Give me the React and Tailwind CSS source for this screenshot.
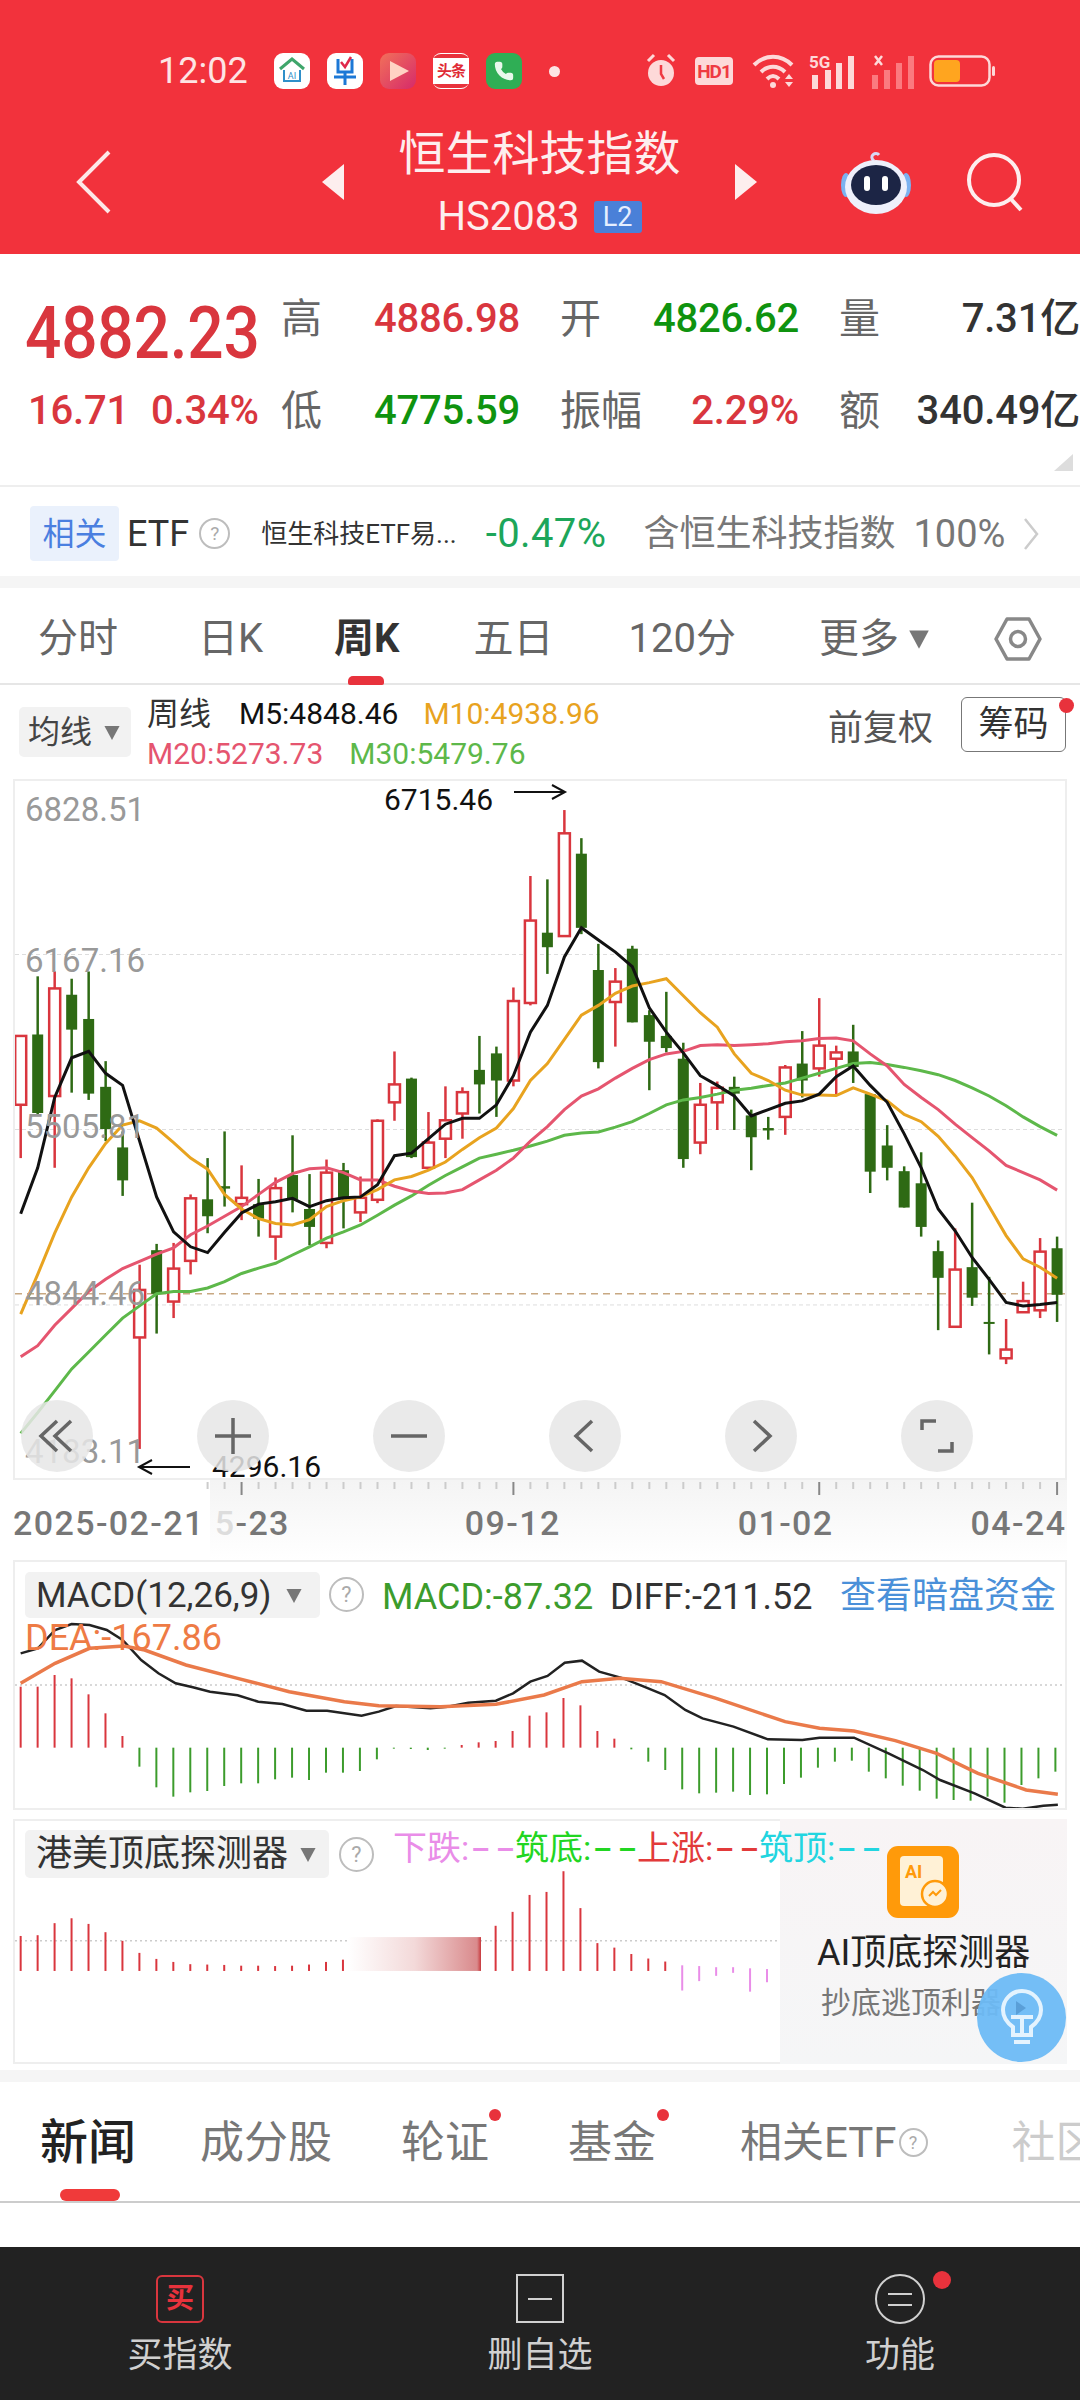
import React from 'react';
import { Phone } from 'lucide-react';

// candle data read off the chart: [colour, wick top, wick bottom, body top, body bottom]
const candles = [
  ['r',528,780,528,670],['g',405,690,525,687],['r',395,800,430,652],['g',410,645,443,515],['g',395,660,493,647],
  ['g',580,745,633,720],['g',725,858,758,826],['r',1000,1380,1052,1150],['g',957,1142,970,1060],['r',955,1110,1008,1076],
  ['r',855,1020,863,992],['g',780,935,865,900],['g',725,880,838,843],['r',795,908,862,875],['g',823,942,875,905],
  ['r',820,990,842,942],['g',733,892,815,865],['g',813,960,885,922],['r',783,966,810,955],['g',790,925,805,865],
  ['r',818,912,862,892],['r',700,873,703,866],['r',560,703,628,665],['g',614,780,616,778],['r',685,802,748,800],
  ['r',632,780,702,740],['r',634,740,644,688],['g',528,688,598,628],['g',550,695,564,620],['r',428,632,456,620],
  ['r',198,465,290,460],['g',205,400,315,345],['r',62,322,110,322],['g',120,318,152,305],['g',338,595,392,582],
  ['r',388,550,416,458],['g',342,500,348,500],['g',475,640,485,540],['g',437,562,528,553],['g',542,800,575,782],
  ['r',625,772,670,748],['r',622,722,635,665],['g',612,722,633,647],['g',680,805,692,737],['g',695,742,718,723],
  ['r',588,732,593,695],['g',518,655,585,620],['r',450,612,548,595],['r',548,650,562,575],['g',505,625,560,592],
  ['g',648,852,648,808],['g',712,826,754,800],['g',797,882,807,882],['g',768,942,832,922],['g',950,1135,972,1027],
  ['r',925,1130,1010,1128],['g',872,1085,1005,1068],['g',1025,1185,1118,1122],['r',1112,1205,1175,1193],['r',1035,1098,1075,1098],
  ['r',945,1110,973,1094],['g',942,1118,966,1062],
];

const ma5 = [895,800,655,573,560,605,630,745,860,932,963,975,933,893,875,870,863,880,868,862,860,835,775,770,740,710,698,698,670,610,520,465,365,305,330,355,385,470,520,563,610,630,652,693,680,667,662,648,612,590,630,665,730,800,885,930,985,1030,1078,1085,1082,1078];
const ma10 = [1102,1020,935,860,800,750,712,703,718,748,780,803,855,885,905,915,918,907,880,868,860,845,825,818,805,788,762,738,718,678,620,585,535,485,465,440,425,418,410,445,480,510,565,605,620,640,650,650,651,635,648,662,690,705,735,775,820,880,940,988,1005,1028];
const ma20 = [1190,1167,1125,1090,1055,1030,1008,993,978,965,938,920,900,880,855,830,812,802,800,810,825,825,838,848,853,852,845,825,805,780,745,715,680,652,637,615,595,577,565,560,548,546,548,546,544,540,538,533,532,538,565,590,628,655,680,710,738,765,795,810,825,846];
const ma30 = [1348,1305,1260,1215,1180,1145,1110,1085,1060,1055,1055,1048,1035,1018,1007,997,980,963,945,932,918,898,877,858,836,816,798,780,772,764,755,745,733,728,726,716,705,688,670,660,655,648,640,636,630,625,615,605,595,585,583,587,593,600,608,620,635,652,672,695,715,733];

const macdBars = [410,410,375,385,433,490,558,650,712,740,727,723,708,700,700,688,683,690,668,668,663,628,596,597,600,596,585,577,573,543,497,487,444,466,543,566,598,635,660,718,730,728,725,735,733,702,683,653,635,632,665,685,707,722,746,750,752,740,758,705,685,665];
const macdBlack = [[30,310],[55,295],[80,240],[104,222],[130,225],[155,240],[178,270],[205,330],[230,370],[255,400],[280,412],[305,425],[345,436],[375,455],[410,462],[445,482],[475,482],[525,497],[550,485],[575,468],[625,475],[650,470],[680,458],[720,452],[745,430],[770,395],[795,378],[820,338],[845,332],[870,365],[905,385],[935,410],[965,435],[995,480],[1020,505],[1065,530],[1115,568],[1165,570],[1190,563],[1240,563],[1290,610],[1340,660],[1365,690],[1415,730],[1460,773],[1485,776],[1515,767],[1536,764]];
const macdOrange = [[30,400],[80,340],[130,295],[180,288],[210,300],[270,345],[345,385],[420,425],[500,455],[550,467],[640,470],[720,463],[790,435],[845,395],[900,385],[960,395],[1040,445],[1140,515],[1190,535],[1240,543],[1300,572],[1360,610],[1420,670],[1490,720],[1536,733]];

const detectorRed = [332,330,298,285,300,322,345,377,393,401,407,408,409,411,411,412,411,408,401,395];
const detectorRed2 = [305,268,223,215,160,258,351,363,380,392,400];
const detectorPink = [[410,477],[412,452],[415,438],[415,430],[418,480],[420,455]];

const candleX = (i) => 20.7 + 16.99 * i;
const chartY = (z) => 780 + z / 2.063;
const maPoints = (arr) => arr.map((v, i) => `${candleX(i).toFixed(1)},${chartY(v).toFixed(1)}`).join(' ');

const macdX = (z) => z / 1.452;
const macdY = (z) => 1550 + z / 3;
const detX = (i) => (30 + 24.63 * i) / 1.452;
const detY = (z) => 1810 + z / 2.657;

function Help({ size, className = '' }) {
  return (
    <span
      style={{ width: size, height: size, fontSize: size * 0.62 }}
      className={`flex shrink-0 items-center justify-center rounded-full border-2 border-[#bdbdbd] leading-none text-[#aaa] ${className}`}
    >
      ?
    </span>
  );
}

function Caret({ className = '' }) {
  return (
    <svg viewBox="0 0 18 18" className={`shrink-0 ${className}`}>
      <path d="M1 2h16L9 17z" fill="#777" />
    </svg>
  );
}

function Stat({ label, value, color, wide }) {
  return (
    <div className={`flex items-center justify-between ${wide ? '' : 'pr-[40px]'}`}>
      <span className="text-[41px] leading-none text-[#666]">{label}</span>
      <span className={`text-[40px] leading-none font-medium tracking-[-0.2px] ${color}`}>{value}</span>
    </div>
  );
}

function StatusBar() {
  return (
    <div className="flex h-[36px] items-center pl-[158px] pt-0 mt-[53px]">
      <span className="w-[92px] text-[36px] leading-none text-[#fde4e4]">12:02</span>
      <svg viewBox="0 0 36 36" className="ml-[24px] h-[36px] w-[36px]">
        <rect width="36" height="36" rx="9" fill="#fff" />
        <path d="M6 16 18 6l12 10" fill="none" stroke="#3fa66b" strokeWidth="3" />
        <path d="M10 17v11h16V17" fill="none" stroke="#2f8fc9" strokeWidth="2" />
        <text x="18" y="26" textAnchor="middle" fontSize="9" fill="#2f8fc9">AI</text>
      </svg>
      <svg viewBox="0 0 36 36" className="ml-[17px] h-[36px] w-[36px]">
        <rect width="36" height="36" rx="9" fill="#fff" />
        <path d="M11 6v13h14V6" fill="none" stroke="#1c78d6" strokeWidth="3" />
        <path d="M14 9l4 5 6-10" fill="none" stroke="#e0284a" strokeWidth="2.5" />
        <path d="M7 24h22M18 19v13" stroke="#1c78d6" strokeWidth="3" />
      </svg>
      <svg viewBox="0 0 36 36" className="ml-[17px] h-[36px] w-[36px]">
        <defs>
          <linearGradient id="playBg" x1="0" y1="0" x2="1" y2="1">
            <stop offset="0" stopColor="#f2705a" />
            <stop offset="1" stopColor="#d62a6a" />
          </linearGradient>
        </defs>
        <rect width="36" height="36" rx="9" fill="url(#playBg)" />
        <path d="M10 8l19 10-19 10z" fill="#ffd3c4" />
      </svg>
      <div className="ml-[17px] flex h-[36px] w-[36px] items-center justify-center rounded-[8px] border-y border-white bg-[#e8323c] outline-0">
        <span className="flex h-[26px] w-[36px] items-center justify-center bg-white text-[15px] leading-none font-bold tracking-[-1px] text-[#e02b36]">头条</span>
      </div>
      <div className="ml-[17px] flex h-[36px] w-[36px] items-center justify-center rounded-[9px] bg-[#2fae55]">
        <Phone size={20} fill="#e8f8ec" stroke="#e8f8ec" />
      </div>
      <span className="ml-[27px] h-[11px] w-[11px] rounded-full bg-[#fde4e4]" />
      <svg viewBox="0 0 32 36" className="ml-[85px] h-[36px] w-[32px]">
        <circle cx="16" cy="20" r="13" fill="#fdd9d9" />
        <path d="M16 12v9l3 5" fill="none" stroke="#ef3a42" strokeWidth="2.5" />
        <path d="M3 8l6-6M29 8l-6-6" stroke="#fdd9d9" strokeWidth="3" />
      </svg>
      <div className="ml-[18px] flex h-[28px] w-[38px] items-center justify-center rounded-[4px] bg-[#fdd9d9] text-[19px] leading-none font-bold tracking-[-1px] text-[#ef3a42]">HD1</div>
      <svg viewBox="0 0 44 36" className="ml-[19px] h-[36px] w-[44px]">
        <path d="M2 12C13 1 29 1 40 12" fill="none" stroke="#fdd9d9" strokeWidth="4" />
        <path d="M9 19c7-7 17-7 24 0" fill="none" stroke="#fdd9d9" strokeWidth="4" />
        <path d="M15 26c4-4 8-4 12 0" fill="none" stroke="#fdd9d9" strokeWidth="4" />
        <circle cx="21" cy="32" r="3" fill="#fdd9d9" />
        <path d="M33 26l4-5 4 5zM33 29l4 5 4-5z" fill="#fdd9d9" />
      </svg>
      <svg viewBox="0 0 47 36" className="ml-[13px] h-[36px] w-[47px]">
        <text x="0" y="15" fontSize="17" fontWeight="700" fill="#fdd9d9">5G</text>
        <rect x="3" y="22" width="6" height="14" fill="#fdd9d9" />
        <rect x="16" y="17" width="6" height="19" fill="#fdd9d9" />
        <rect x="27" y="10" width="6" height="26" fill="#fdd9d9" />
        <rect x="39" y="3" width="6" height="33" fill="#fdd9d9" />
      </svg>
      <svg viewBox="0 0 44 36" className="ml-[15px] h-[36px] w-[44px]">
        <path d="M4 3l7 9M11 3l-7 9" stroke="#fdd9d9" strokeWidth="2.5" />
        <rect x="1" y="22" width="6" height="14" fill="#fb7a7f" />
        <rect x="13" y="17" width="6" height="19" fill="#fb7a7f" />
        <rect x="25" y="10" width="6" height="26" fill="#fb7a7f" />
        <rect x="37" y="3" width="6" height="33" fill="#fb7a7f" />
      </svg>
      <svg viewBox="0 0 66 32" className="ml-[14px] h-[32px] w-[66px]">
        <rect x="1.5" y="1.5" width="59" height="29" rx="8" fill="none" stroke="#fdd9d9" strokeWidth="2.5" />
        <rect x="5" y="5" width="26" height="22" rx="4" fill="#ffa51f" />
        <rect x="63" y="11" width="3" height="10" rx="1.5" fill="#fdd9d9" />
      </svg>
    </div>
  );
}

function NavBar() {
  return (
    <div className="mt-[41px] flex h-[104px] items-center">
      <svg viewBox="0 0 36 64" className="ml-[76px] h-[64px] w-[36px]">
        <path d="M33 2 3 32l30 30" fill="none" stroke="#fde8e8" strokeWidth="4" />
      </svg>
      <svg viewBox="0 0 22 36" className="ml-[210px] h-[36px] w-[22px]">
        <path d="M22 0v36L0 18z" fill="#fdeeee" />
      </svg>
      <div className="flex w-[391px] flex-col items-center">
        <span className="text-[47px] leading-[46px] text-[#fdeeee]">恒生科技指数</span>
        <div className="mt-[24px] flex items-center">
          <span className="text-[40px] leading-[32px] text-[#fdeeee]">HS2083</span>
          <span className="ml-[14px] flex h-[32px] w-[48px] items-center justify-center rounded-[3px] bg-[#4a80d8] text-[27px] leading-none text-[#e6eeff]">L2</span>
        </div>
      </div>
      <svg viewBox="0 0 22 36" className="h-[36px] w-[22px]">
        <path d="M0 0v36l22-18z" fill="#fdeeee" />
      </svg>
      <svg viewBox="0 0 72 66" className="ml-[83px] h-[66px] w-[72px]">
        <path d="M34 12c-6-5 2-10 5-6" fill="none" stroke="#d8d8f4" strokeWidth="3" />
        <ellipse cx="6" cy="36" rx="5" ry="12" fill="#7bb2f0" />
        <ellipse cx="66" cy="36" rx="5" ry="12" fill="#7bb2f0" />
        <ellipse cx="36" cy="38" rx="31" ry="27" fill="#eef0fb" />
        <ellipse cx="36" cy="36" rx="25" ry="20" fill="#1c2545" />
        <rect x="24" y="27" width="6" height="15" rx="3" fill="#fff" />
        <rect x="42" y="27" width="6" height="15" rx="3" fill="#fff" />
      </svg>
      <svg viewBox="0 0 60 60" className="ml-[54px] h-[60px] w-[60px]">
        <circle cx="28" cy="28" r="25" fill="none" stroke="#fdeeee" strokeWidth="4" />
        <path d="M44 46l11 12" stroke="#fdeeee" strokeWidth="4" />
      </svg>
    </div>
  );
}

function Quote() {
  return (
    <div className="relative h-[233px] border-b-2 border-[#eee] pl-[25px] pt-[19px]">
      <div className="grid grid-cols-[256px_279px_279px_241px] grid-rows-[92px_92px]">
        <div className="flex origin-left scale-y-[1.12] items-center pt-[28px] text-[64px] leading-none font-medium tracking-[-0.2px] text-[#d9363e]">4882.23</div>
        <Stat label="高" value="4886.98" color="text-[#d9363e]" />
        <Stat label="开" value="4826.62" color="text-[#0f930f]" />
        <Stat label="量" value="7.31亿" color="text-[#333]" wide />
        <div className="flex items-center text-[40px] leading-none font-medium tracking-[-0.2px] text-[#d9363e]">
          <span className="ml-[3px] w-[123px]">16.71</span>
          <span>0.34%</span>
        </div>
        <Stat label="低" value="4775.59" color="text-[#0f930f]" />
        <Stat label="振幅" value="2.29%" color="text-[#d9363e]" />
        <Stat label="额" value="340.49亿" color="text-[#333]" wide />
      </div>
      <svg viewBox="0 0 19 17" className="absolute right-[7px] top-[200px] h-[17px] w-[19px]">
        <path d="M19 0v17H0z" fill="#ddd" />
      </svg>
    </div>
  );
}

function EtfRow() {
  return (
    <div className="flex h-[89px] items-start pt-[19px]">
      <span className="ml-[30px] flex h-[55px] w-[89px] items-center justify-center rounded-[4px] bg-[#eaf1fc] text-[32px] leading-none text-[#4a7fe0]">相关</span>
      <span className="ml-[8px] flex h-[55px] items-center text-[36px] leading-none text-[#333]">ETF</span>
      <div className="flex h-[55px] items-center"><Help size={31} className="ml-[10px]" /></div>
      <span className="ml-[31px] flex h-[55px] items-center text-[26px] leading-none text-[#333]">恒生科技ETF易...</span>
      <span className="ml-[29px] flex h-[55px] items-center text-[40px] leading-none tracking-[0.4px] text-[#1da65a]">-0.47%</span>
      <span className="ml-[37px] flex h-[55px] items-center text-[36px] leading-none text-[#777]">含恒生科技指数</span>
      <span className="ml-[18px] flex h-[55px] items-center text-[38px] leading-none text-[#777]">100%</span>
      <div className="ml-[18px] flex h-[55px] items-center">
        <svg viewBox="0 0 16 32" className="h-[32px] w-[16px]">
          <path d="M2 1l12 15L2 31" fill="none" stroke="#ccc" strokeWidth="2.5" />
        </svg>
      </div>
    </div>
  );
}

function PeriodTabs() {
  return (
    <div className="relative flex h-[97px] items-center border-b-2 border-[#e6e6e6] pt-[6px] text-[40px] leading-none text-[#666]">
      <span className="ml-[38px]">分时</span>
      <span className="ml-[80px]">日K</span>
      <span className="ml-[71px] font-bold text-[#333]">周K</span>
      <span className="ml-[74px]">五日</span>
      <span className="ml-[75px]">120分</span>
      <span className="ml-[83px]">更多</span>
      <Caret className="ml-[9px] h-[22px] w-[22px]" />
      <svg viewBox="0 0 48 46" className="ml-[64px] h-[46px] w-[48px]">
        <path d="M13 3h22l11 20-11 20H13L2 23z" fill="none" stroke="#888" strokeWidth="3.5" strokeLinejoin="round" />
        <circle cx="24" cy="23" r="7.5" fill="none" stroke="#888" strokeWidth="3.5" />
      </svg>
      <span className="absolute bottom-[-2px] left-[348px] h-[9px] w-[36px] rounded-t-[5px] rounded-b-[2px] bg-[#e8323c]" />
    </div>
  );
}

function MaLegend() {
  return (
    <div className="relative flex h-[94px] items-start text-[30px] leading-none">
      <div className="ml-[19px] mt-[22px] flex h-[50px] w-[112px] items-center rounded-[5px] bg-[#f2f2f2] pl-[9px]">
        <span className="text-[32px] text-[#444]">均线</span>
        <Caret className="ml-[11px] h-[17px] w-[18px]" />
      </div>
      <div className="ml-[16px] mt-[14px] flex flex-col gap-[10px]">
        <div className="flex h-[30px] items-center">
          <span className="text-[32px] text-[#333]">周线</span>
          <span className="ml-[28px] text-[#111]">M5:4848.46</span>
          <span className="ml-[25px] text-[#e8a31f]">M10:4938.96</span>
        </div>
        <div className="flex h-[30px] items-center">
          <span className="text-[#e5556f]">M20:5273.73</span>
          <span className="ml-[26px] text-[#5db84a]">M30:5479.76</span>
        </div>
      </div>
      <span className="absolute left-[828px] top-[26px] text-[35px] text-[#555]">前复权</span>
      <span className="absolute left-[961px] top-[12px] flex h-[55px] w-[105px] items-center justify-center rounded-[6px] border-[1.5px] border-[#777] text-[35px] text-[#333]">筹码</span>
      <span className="absolute left-[1059px] top-[13px] h-[15px] w-[15px] rounded-full bg-[#e8323c]" />
    </div>
  );
}

function Candle({ c, i }) {
  const x = candleX(i);
  const [kind, wt, wb, bt, bb] = c;
  const top = chartY(bt);
  const h = Math.max(chartY(bb) - top, 2);
  if (kind === 'g') {
    return (
      <g>
        <line x1={x} x2={x} y1={chartY(wt)} y2={chartY(wb)} stroke="#2e6a14" strokeWidth="2.5" />
        <rect x={x - 5.5} y={top} width="11" height={h} fill="#2e6a14" />
      </g>
    );
  }
  return (
    <g>
      <line x1={x} x2={x} y1={chartY(wt)} y2={chartY(wb)} stroke="#d9363e" strokeWidth="2.5" />
      <rect x={x - 5.5} y={top} width="11" height={h} fill="#fff" stroke="#d9363e" strokeWidth="2.5" />
    </g>
  );
}

function KChart() {
  const labels = [
    ['6828.51', 'top-[13px]'],
    ['6167.16', 'top-[164px]'],
    ['5505.81', 'top-[330px]'],
    ['4844.46', 'top-[497px]'],
    ['4183.11', 'top-[655px]'],
  ];
  const buttons = [57, 233, 409, 585, 761, 937];
  return (
    <div className="relative ml-[13px] h-[701px] w-[1054px] outline-2 -outline-offset-2 outline-[#eee]">
      <svg viewBox="13 779 1054 701" className="block h-[701px] w-[1054px]">
        {[360, 721, 1083].map((z) => (
          <line key={z} x1="15" x2="1065" y1={chartY(z)} y2={chartY(z)} stroke="#ddd" strokeWidth="1" strokeDasharray="4 3" />
        ))}
        <line x1="15" x2="1065" y1={chartY(1060)} y2={chartY(1060)} stroke="#c8a882" strokeWidth="1.5" strokeDasharray="7 5" />
        {candles.map((c, i) => (
          <Candle key={i} c={c} i={i} />
        ))}
        <polyline points={maPoints(ma30)} fill="none" stroke="#5db84a" strokeWidth="3" />
        <polyline points={maPoints(ma20)} fill="none" stroke="#e5556f" strokeWidth="3" />
        <polyline points={maPoints(ma10)} fill="none" stroke="#e8a31f" strokeWidth="3" />
        <polyline points={maPoints(ma5)} fill="none" stroke="#111" strokeWidth="3" />
        <path d="M514 792h50M552 785l13 7-13 7" fill="none" stroke="#111" strokeWidth="2" />
        <path d="M190 1467h-50M152 1460l-13 7 13 7" fill="none" stroke="#111" strokeWidth="2" />
      </svg>
      {labels.map(([t, pos]) => (
        <span key={t} className={`absolute left-[12px] text-[33px] leading-[36px] text-[#999] ${pos}`}>{t}</span>
      ))}
      <span className="absolute left-[371px] top-[4px] text-[30px] leading-[34px] text-[#111]">6715.46</span>
      <span className="absolute left-[199px] top-[671px] text-[30px] leading-[34px] text-[#111]">4296.16</span>
      {buttons.map((x, i) => (
        <span key={x} style={{ left: x - 49 }} className="absolute top-[621px] flex h-[72px] w-[72px] items-center justify-center rounded-full bg-[#e6e6e6]/85">
          <svg viewBox="0 0 40 40" className="h-[40px] w-[40px]" fill="none" stroke="#666" strokeWidth="3.5">
            {i === 0 && <path d="M20 5 4 20l16 15M34 5 18 20l16 15" />}
            {i === 1 && <path d="M20 2v36M2 20h36" />}
            {i === 2 && <path d="M2 20h36" />}
            {i === 3 && <path d="M27 5 11 20l16 15" />}
            {i === 4 && <path d="M13 5l16 15-16 15" />}
            {i === 5 && <path d="M5 14V5h14M35 26v9H21" />}
          </svg>
        </span>
      ))}
    </div>
  );
}

function TimeAxis() {
  return (
    <div className="relative h-[80px] bg-gradient-to-b from-[#f4f4f4] to-white">
      <div className="absolute left-0 top-0 h-full w-[210px] bg-white" />
      <div className="absolute right-0 top-0 h-full w-[13px] bg-white" />
      <svg viewBox="13 1480 1054 16" className="absolute left-[13px] top-0 h-[16px] w-[1054px]">
        {candles.map((c, i) => {
          if (i < 11) return null;
          const big = i === 13 || i === 29 || i === 47 || i === 61;
          return (
            <line key={i} x1={candleX(i)} x2={candleX(i)} y1="1482" y2={big ? 1495 : 1489} stroke={big ? '#888' : '#ccc'} strokeWidth="2" />
          );
        })}
      </svg>
      <div className="absolute left-[13px] top-[24px] flex w-[1054px] text-[34px] leading-[38px] font-medium tracking-[1.4px] text-[#777]">
        <span>2025-02-21</span>
        <span className="ml-[10px] text-[#ddd]">5</span>
        <span>-23</span>
        <span className="ml-[175px]">09-12</span>
        <span className="ml-[177px]">01-02</span>
        <span className="ml-[137px]">04-24</span>
      </div>
    </div>
  );
}

function MacdPanel() {
  return (
    <div className="relative ml-[13px] h-[250px] w-[1054px] outline-2 -outline-offset-2 outline-[#eee]">
      <svg viewBox="13 1560 1054 250" className="block h-[250px] w-[1054px]">
        <line x1="15" x2="1065" y1={macdY(405)} y2={macdY(405)} stroke="#ccc" strokeWidth="1.5" strokeDasharray="2 3" />
        {macdBars.map((top, i) => {
          const x = macdX(30 + 24.63 * i);
          const up = top < 593;
          return (
            <line key={i} x1={x} x2={x} y1={macdY(593)} y2={macdY(top)} stroke={up ? '#d9363e' : '#3c9c2c'} strokeWidth="2" />
          );
        })}
        <polyline points={macdBlack.map(([x, y]) => `${macdX(x)},${macdY(y)}`).join(' ')} fill="none" stroke="#222" strokeWidth="2.5" />
        <polyline points={macdOrange.map(([x, y]) => `${macdX(x)},${macdY(y)}`).join(' ')} fill="none" stroke="#ea7a4a" strokeWidth="3.5" />
      </svg>
      <div className="absolute left-[12px] top-[12px] flex h-[46px] w-[295px] items-center rounded-[5px] bg-[#f2f2f2] pl-[11px]">
        <span className="text-[35px] leading-none text-[#333]">MACD(12,26,9)</span>
        <Caret className="ml-[13px] h-[17px] w-[18px]" />
      </div>
      <Help size={35} className="absolute left-[316px] top-[17px]" />
      <span className="absolute left-[369px] top-[19px] text-[36px] leading-[36px] text-[#3c9c2c]">MACD:-87.32</span>
      <span className="absolute left-[597px] top-[19px] text-[36px] leading-[36px] text-[#333]">DIFF:-211.52</span>
      <span className="absolute left-[827px] top-[18px] text-[36px] leading-[36px] text-[#4a90d9]">查看暗盘资金</span>
      <span className="absolute left-[12px] top-[60px] text-[36px] leading-[36px] text-[#ee7b45]">DEA:-167.86</span>
    </div>
  );
}

function DetectorPanel() {
  const signals = [
    ['下跌', 'text-[#e98de8]'],
    ['筑底', 'text-[#22d622]'],
    ['上涨', 'text-[#e23a3a]'],
    ['筑顶', 'text-[#22d5e0]'],
  ];
  return (
    <div className="relative ml-[13px] mt-[9px] h-[245px] w-[1054px] outline-2 -outline-offset-2 outline-[#eee]">
      <svg viewBox="13 1818 1054 245" className="block h-[245px] w-[1054px]">
        <defs>
          <linearGradient id="blurBlock" x1="0" x2="1" y1="0" y2="0">
            <stop offset="0" stopColor="#fff" />
            <stop offset="0.5" stopColor="#f3d9d9" />
            <stop offset="0.97" stopColor="#d98a8c" />
            <stop offset="1" stopColor="#c8383c" />
          </linearGradient>
        </defs>
        <line x1="15" x2="780" y1={detY(345)} y2={detY(345)} stroke="#ccc" strokeWidth="1.5" strokeDasharray="2 3" />
        {detectorRed.map((t, i) => (
          <line key={i} x1={detX(i)} x2={detX(i)} y1={detY(425)} y2={detY(t)} stroke="#d9363e" strokeWidth="2" />
        ))}
        <rect x="348" y={detY(335)} width="133" height={detY(425) - detY(335)} fill="url(#blurBlock)" />
        {detectorRed2.map((t, i) => (
          <line key={i} x1={detX(i + 28)} x2={detX(i + 28)} y1={detY(425)} y2={detY(t)} stroke="#d9363e" strokeWidth="2" />
        ))}
        {detectorPink.map(([a, b], i) => (
          <line key={i} x1={detX(i + 39)} x2={detX(i + 39)} y1={detY(a)} y2={detY(b)} stroke="#e98de8" strokeWidth="2" />
        ))}
      </svg>
      <div className="absolute left-[12px] top-[11px] flex h-[48px] w-[304px] items-center rounded-[5px] bg-[#f2f2f2] pl-[11px]">
        <span className="text-[36px] leading-none text-[#333]">港美顶底探测器</span>
        <Caret className="ml-[11px] h-[17px] w-[18px]" />
      </div>
      <Help size={35} className="absolute left-[326px] top-[18px]" />
      <div className="absolute bottom-0 right-0 top-0 flex w-[287px] flex-col bg-gradient-to-b from-[#f8f4f5] to-[#f5f6f7] pl-[37px] pt-[27px]">
        <svg viewBox="0 0 72 72" className="ml-[70px] h-[72px] w-[72px]">
          <rect width="72" height="72" rx="11" fill="#ff9a0a" />
          <rect x="13" y="10" width="43" height="50" rx="4" fill="#fff1d6" />
          <text x="18" y="32" fontSize="18" fontWeight="700" fill="#ff9a0a">AI</text>
          <circle cx="48" cy="48" r="13" fill="#fff1d6" stroke="#ff9a0a" strokeWidth="2.5" />
          <path d="M42 50l4-4 3 3 5-5" fill="none" stroke="#ff9a0a" strokeWidth="2" />
        </svg>
        <span className="mt-[19px] text-[36px] leading-[32px] text-[#222]">AI顶底探测器</span>
        <span className="ml-[4px] mt-[19px] text-[30px] leading-[30px] text-[#777]">抄底逃顶利器</span>
      </div>
      <div className="absolute left-[380px] top-[11px] flex text-[34px] leading-[36px]">
        {signals.map(([name, color]) => (
          <span key={name} className={`w-[122px] whitespace-nowrap ${color}`}>
            {name}:<span className="ml-[2px] inline-block origin-left scale-x-[1.7] font-medium tracking-[3px]">--</span>
          </span>
        ))}
      </div>
      <div className="absolute left-[964px] top-[154px] flex h-[89px] w-[89px] items-center justify-center rounded-full bg-[#6dbbf5]/95">
        <svg viewBox="0 0 42 58" className="h-[58px] w-[42px]" fill="none" stroke="#e4f3fe" strokeWidth="4">
          <path d="M12 38C5 33 2 27 2 21a19 19 0 0 1 38 0c0 6-3 12-10 17v8H12z" />
          <path d="M13 53h16M10 28h22M21 28v18" />
          <path d="M15 12l10 7-10 7z" fill="#5a9fd8" stroke="none" />
        </svg>
      </div>
    </div>
  );
}

function NewsTabs() {
  return (
    <div className="relative flex h-[121px] items-center overflow-hidden whitespace-nowrap border-b-2 border-[#ccc] pt-[2px] text-[44px] leading-none text-[#777]">
      <span className="ml-[40px] shrink-0 text-[48px] font-medium text-[#222]">新闻</span>
      <span className="ml-[64px] shrink-0">成分股</span>
      <span className="relative ml-[69px] shrink-0">
        轮证
        <span className="absolute right-[-12px] top-[-12px] h-[12px] w-[12px] rounded-full bg-[#e8323c]" />
      </span>
      <span className="relative ml-[79px] shrink-0">
        基金
        <span className="absolute right-[-13px] top-[-12px] h-[12px] w-[12px] rounded-full bg-[#e8323c]" />
      </span>
      <span className="ml-[84px] shrink-0 text-[42px]">相关ETF</span>
      <Help size={29} className="ml-[2px]" />
      <span className="ml-[84px] shrink-0 text-[#ccc]">社区</span>
      <span className="absolute bottom-0 left-[60px] h-[12px] w-[60px] rounded-full bg-[#f03a3a]" />
    </div>
  );
}

function FooterBar() {
  return (
    <div className="mt-[44px] flex h-[153px] bg-[#222] text-[35px] leading-none text-[#d0d0d0]">
      <div className="flex w-[360px] flex-col items-center pt-[28px]">
        <span className="flex h-[48px] w-[48px] items-center justify-center rounded-[6px] border-2 border-[#d9363e] text-[28px] font-bold leading-none text-[#e8323c]">买</span>
        <span className="mt-[15px]">买指数</span>
      </div>
      <div className="flex w-[360px] flex-col items-center pt-[27px]">
        <span className="flex h-[49px] w-[48px] items-center justify-center border-2 border-[#d0d0d0]">
          <span className="h-[2px] w-[24px] bg-[#d0d0d0]" />
        </span>
        <span className="mt-[15px]">删自选</span>
      </div>
      <div className="relative flex w-[360px] flex-col items-center pt-[27px]">
        <span className="flex h-[50px] w-[50px] flex-col items-center justify-center gap-[9px] rounded-full border-2 border-[#d0d0d0]">
          <span className="h-[2px] w-[24px] bg-[#d0d0d0]" />
          <span className="h-[2px] w-[24px] bg-[#d0d0d0]" />
        </span>
        <span className="mt-[14px]">功能</span>
        <span className="absolute left-[213px] top-[24px] h-[18px] w-[18px] rounded-full bg-[#e8323c]" />
      </div>
    </div>
  );
}

export default function App() {
  return (
    <div className="h-[2400px] w-[1080px] overflow-hidden bg-white [font-family:Roboto,'Noto_Sans_CJK_SC',sans-serif]">
      <div className="h-[254px] overflow-hidden bg-[#f2323c] pt-px">
        <div className="-mt-px">
          <StatusBar />
          <NavBar />
        </div>
      </div>
      <Quote />
      <EtfRow />
      <div className="h-[12px] bg-[#f5f5f5]" />
      <PeriodTabs />
      <MaLegend />
      <KChart />
      <TimeAxis />
      <MacdPanel />
      <DetectorPanel />
      <div className="mt-[6px] h-[12px] bg-[#f5f5f5]" />
      <NewsTabs />
      <FooterBar />
    </div>
  );
}
